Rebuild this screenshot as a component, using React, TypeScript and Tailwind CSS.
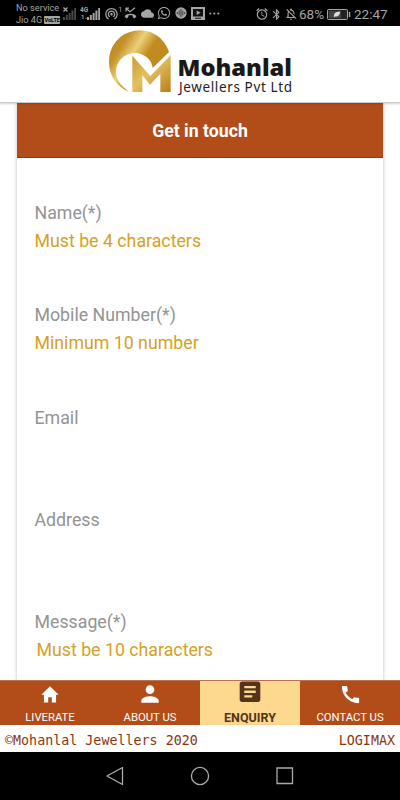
import type { ReactNode } from 'react';
import { MdPerson, MdArticle, MdCall, MdCloud, MdWifiTethering, MdBluetooth, MdAlarm, MdOutlineNotificationsOff } from 'react-icons/md';
import { FaWhatsapp } from 'react-icons/fa';

interface Field {
  label: string;
  error?: string;
  indent?: boolean;
}

const fields: Field[] = [
  { label: 'Name(*)', error: 'Must be 4 characters' },
  { label: 'Mobile Number(*)', error: 'Minimum 10 number' },
  { label: 'Email' },
  { label: 'Address' },
  { label: 'Message(*)', error: 'Must be 10 characters', indent: true },
];

const SignalBars = ({ dim }: { dim?: boolean }) => (
  <svg width="13" height="12" viewBox="0 0 13 12" className={dim ? 'text-[#484848]' : 'text-[#a5a5a5]'} fill="currentColor">
    <path d="M0 9h2v3H0zM2.8 7h2v5h-2zM5.6 5h2v7h-2zM8.4 2.5h2V12h-2zM11.2 0H13v12h-1.8z" />
  </svg>
);

const StatusBar = () => (
  <div className="flex h-[26px] shrink-0 items-center bg-black pl-4 text-[#a5a5a5]">
    <div className="mt-[2px] w-[46px] text-[9.2px] leading-[12.5px] whitespace-nowrap">
      <div>No service</div>
      <div className="flex items-center gap-[2px]">
        Jio 4G
        <span className="flex h-[8px] w-[16px] items-center justify-center rounded-[1px] bg-[#a5a5a5] text-[5.5px] leading-none font-bold text-black">VoLTE</span>
      </div>
    </div>
    <div className="relative mt-[2px] ml-[1px]">
      <SignalBars dim />
      <svg width="5" height="5" viewBox="0 0 5 5" className="absolute -top-[1px] left-0" stroke="currentColor" strokeWidth="1.3">
        <path d="M.5.5l4 4M4.5.5l-4 4" />
      </svg>
    </div>
    <div className="relative mt-[2px] ml-[11px]">
      <SignalBars />
      <span className="absolute -top-[1px] -left-[7px] bg-black text-[6.5px] leading-[7px] font-bold">4G</span>
      <span className="absolute top-[6px] -left-[6px] text-[6px] leading-[6px] font-bold">1↓</span>
    </div>
    <MdWifiTethering className="ml-[4px] size-[15px]" />
    <span className="-mt-[7px] -ml-px w-[6px] text-[8px]">1</span>
    <svg width="13" height="12" viewBox="0 0 13 12">
      <path d="M2 4.5V1.2h3M2.2 1.5L6 4.8l5-4" fill="none" stroke="currentColor" strokeWidth="1.2" />
      <path d="M.6 9.2C3.5 6 9.5 6 12.4 9.2L10.6 11.4 8.7 10.3V8.6C7.3 8 5.7 8 4.3 8.6v1.7L2.4 11.4z" fill="currentColor" />
    </svg>
    <MdCloud className="ml-[4px] size-[13px]" />
    <FaWhatsapp className="ml-[3px] size-[14px]" />
    <svg width="12" height="12" viewBox="0 0 12 12" className="ml-[4px]">
      <circle cx="6" cy="6" r="5.7" fill="currentColor" />
      <path d="M2.3 5v2M4.2 3.7v4.6M6 2v8M7.8 3.7v4.6M9.7 5v2" stroke="#222" strokeWidth=".8" />
    </svg>
    <svg width="14" height="13" viewBox="0 0 14 13" className="ml-[4px]">
      <path d="M0 0h14v13H0z" fill="currentColor" />
      <path d="M2 2h10v7.5H2zM4 10.8h6v1H4z" fill="#111" />
      <path d="M5.6 3.5l4 2.3-4 2.3z" fill="currentColor" />
    </svg>
    <svg width="11" height="3" viewBox="0 0 11 3" className="ml-[4px]" fill="currentColor">
      <circle cx="1.3" cy="1.5" r="1.1" />
      <circle cx="5.3" cy="1.5" r="1.1" />
      <circle cx="9.3" cy="1.5" r="1.1" />
    </svg>
    <div className="ml-auto flex items-center pt-[2px] pr-[13px] text-[13.5px]">
      <MdAlarm className="size-[14px]" />
      <MdBluetooth className="ml-[1px] size-[13px]" />
      <MdOutlineNotificationsOff className="ml-[1px] size-[14px]" />
      <span className="ml-[1px] w-[25px]">68%</span>
      <svg width="24" height="11" viewBox="0 0 24 11" className="ml-[3px]">
        <rect x=".5" y=".5" width="20" height="10" rx="1" fill="#222" stroke="currentColor" />
        <path d="M2 2h12v7H2z" fill="#444" />
        <path d="M7 8.5c-.5-4 1-5.5 6-6C13 6.5 11 8 8 7.5z" fill="#ddd" />
        <path d="M21.8 3h1.5v5h-1.5z" fill="currentColor" />
      </svg>
      <span className="ml-[3px] w-[33px]">22:47</span>
    </div>
  </div>
);

const Logo = () => (
  <svg width="200" height="76" viewBox="0 0 200 76">
    <defs>
      <linearGradient id="gold" x1="0" y1="0.1" x2="1" y2="0.75">
        <stop offset="0" stopColor="#b9831b" />
        <stop offset=".22" stopColor="#c5922a" />
        <stop offset=".4" stopColor="#ecd078" />
        <stop offset=".58" stopColor="#c18c20" />
        <stop offset="1" stopColor="#bd871c" />
      </linearGradient>
      <linearGradient id="goldM" x1="0" y1="0" x2="1" y2="1">
        <stop offset="0" stopColor="#c99a2c" />
        <stop offset=".45" stopColor="#e3c160" />
        <stop offset="1" stopColor="#b77f18" />
      </linearGradient>
    </defs>
    <g transform="translate(0 -2) scale(.33333)">
      <path d="M207 84A92 92 0 0 0 27 114C27 154 50 188 86 203C59 183 47 163 48 142A56 56 0 0 1 103 87C134 87 156 108 158 132Z" fill="url(#gold)" />
      <path d="M97 95L151 156L212 93V204H181V149L150 182L127 154V204H97Z" fill="url(#goldM)" />
    </g>
    <text x="77.5" y="50" textLength="114.5" lengthAdjust="spacingAndGlyphs" fontSize="22" fontWeight="800" fill="#191919" fontFamily="'Open Sans', 'Noto Sans', sans-serif">Mohanlal</text>
    <text x="79" y="66" textLength="113" fontSize="13.5" fill="#222" fontFamily="'Noto Sans', sans-serif">Jewellers Pvt Ltd</text>
  </svg>
);

const FormField = ({ label, error, indent }: Field) => (
  <div className="h-[102.1px] shrink-0 text-[17.75px] leading-[28px]">
    <div className="text-[#939393]">{label}</div>
    {error && <div className={indent ? 'pl-[2px] text-[#d5a11e]' : 'text-[#d5a11e]'}>{error}</div>}
  </div>
);

const HomeIcon = () => (
  <svg width="22" height="21" viewBox="0 0 22 21" className="mt-[2px] mb-[2px]" fill="currentColor">
    <path d="M11 .3L.3 10.7h3.2v9.8h5.3v-6.7h4.4v6.7h5.3v-9.8h3.2z" />
  </svg>
);

interface TabProps {
  icon: ReactNode;
  label: string;
  active?: boolean;
}

const Tab = ({ icon, label, active }: TabProps) => (
  <div
    className={
      active
        ? 'flex flex-1 flex-col items-center bg-[#fcd98e] text-[12.5px] font-bold text-[#55341b]'
        : 'flex flex-1 flex-col items-center bg-[#b24c19] pt-[2.5px] text-[11.3px] text-white'
    }
  >
    {icon}
    <span className="mt-[5.5px] leading-[15px]">{label}</span>
  </div>
);

export default function App() {
  return (
    <div className="flex h-[800px] w-[400px] flex-col overflow-hidden bg-white font-['Roboto',sans-serif]">
      <StatusBar />
      <header className="relative z-10 flex h-[77px] shrink-0 justify-center border-b border-[#c9c9c9] bg-white shadow-[0_1px_2px_rgba(0,0,0,0.18)]">
        <Logo />
      </header>

      <main className="min-h-0 flex-1 overflow-hidden px-[17px]">
        <div className="h-[640px] bg-white shadow-[0_0_4px_rgba(0,0,0,0.25)]">
          <h1 className="flex h-[55px] items-center justify-center border-b border-[#9c3306] bg-[#b24c19] pt-[3px] text-[17.7px] font-bold text-white">
            Get in touch
          </h1>
          <div className="flex flex-col px-[17.5px] pt-[41.4px]">
            {fields.map((field) => (
              <FormField key={field.label} {...field} />
            ))}
          </div>
        </div>
      </main>

      <nav className="flex h-[45px] shrink-0 border-t border-[#b9734e]">
        <Tab icon={<HomeIcon />} label="LIVERATE" />
        <Tab icon={<MdPerson className="size-[30px] -my-[2.5px]" />} label="ABOUT US" />
        <Tab active icon={<MdArticle className="size-[28px] -mt-[3px] -mb-px" />} label="ENQUIRY" />
        <Tab icon={<MdCall className="size-[27px] -my-px" />} label="CONTACT US" />
      </nav>

      <footer className="flex h-[27px] shrink-0 items-center justify-between px-[5px] pt-[5px] font-['DejaVu_Sans_Mono',monospace] text-[13.35px] text-[#8c360f]">
        <span>©Mohanlal Jewellers 2020</span>
        <span>LOGIMAX</span>
      </footer>

      {/* Android navigation buttons */}
      <div className="flex h-[48px] shrink-0 items-center justify-center gap-[65px] bg-black">
        <svg width="20" height="20" viewBox="0 0 20 20" fill="none" stroke="#aaa" strokeWidth="1.3" strokeLinejoin="round">
          <path d="M2 10L17.5 1.5v17z" />
        </svg>
        <svg width="20" height="20" viewBox="0 0 20 20" fill="none" stroke="#aaa" strokeWidth="1.3">
          <circle cx="10" cy="10" r="8.6" />
        </svg>
        <svg width="20" height="20" viewBox="0 0 20 20" fill="none" stroke="#aaa" strokeWidth="1.3">
          <path d="M2 2h15.5v15.5H2z" />
        </svg>
      </div>
    </div>
  );
}
